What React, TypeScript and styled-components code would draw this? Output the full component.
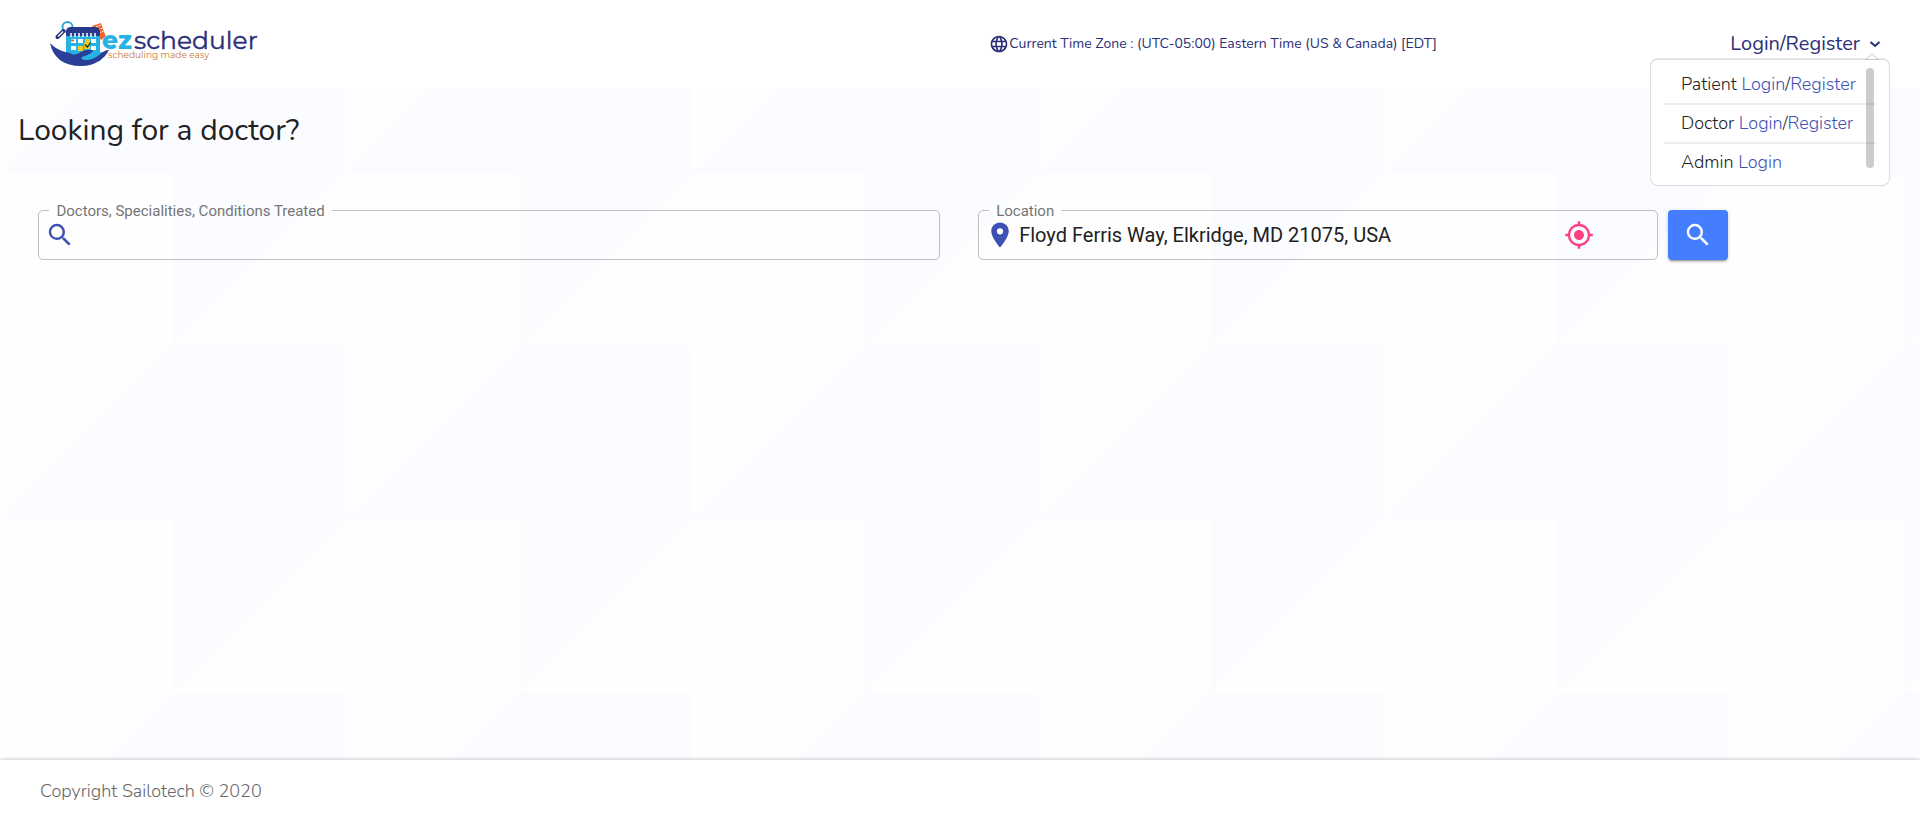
import React from "react";
import styled, { createGlobalStyle } from "styled-components";
import { MdLanguage, MdLocationOn, MdMyLocation, MdSearch } from "react-icons/md";

const sans = `Nunito, "Open Sans", sans-serif`;
const logoFont = `Montserrat, "Open Sans", sans-serif`;
const navy = "#2b2f77";
const indigo = "#3f51b5";

const GlobalStyle = createGlobalStyle`
  *, *::before, *::after { box-sizing: border-box; }
  body { margin: 0; font-family: ${sans}; font-weight: 400; color: #212121; }
  a { text-decoration: none; }
`;

const Page = styled.div`
  display: flex;
  flex-direction: column;
  min-height: 100vh;
  background:
    conic-gradient(transparent 50%, #fefefe 50% 75%, transparent 75%) 0 0 / 346px 346px,
    linear-gradient(135deg, #fefefe 25%, #fbfcff 25% 75%, #fefefe 75%) 0 0 / 346px 346px;
`;

const Header = styled.header`
  display: grid;
  grid-template-columns: 51% 1fr auto;
  align-items: center;
  height: 88px;
  padding: 0 38px 0 48px;
  background: #fff;
`;

const LogoLink = styled.a`
  display: block;
  width: 216px;
  height: 56px;
  svg { display: block; }
`;

const TimeZone = styled.div`
  display: flex;
  align-items: center;
  padding-left: 6px;
  font-size: 14px;
  line-height: 20px;
  color: ${navy};
  white-space: nowrap;
`;

const Account = styled.div`
  position: relative;
`;

const AccountButton = styled.button`
  display: flex;
  align-items: center;
  gap: 8px;
  padding: 0;
  border: 0;
  background: none;
  font: 400 20px/28px ${sans};
  color: ${navy};
  cursor: pointer;
`;

const Menu = styled.nav`
  position: absolute;
  top: 28px;
  right: -8px;
  width: 240px;
  padding: 6px 13px 4px;
  border: 1px solid #dcdcdc;
  border-top: 2px solid #e4e4e4;
  border-radius: 8px;
  background: #fff;
`;

const MenuCaret = styled.svg`
  position: absolute;
  top: -7px;
  right: 10px;
`;

const MenuThumb = styled.span`
  position: absolute;
  top: 8px;
  right: 15px;
  width: 8px;
  height: 100px;
  border-radius: 4px;
  background: rgba(0, 0, 0, 0.2);
`;

const MenuList = styled.ul`
  margin: 0;
  padding: 0;
  list-style: none;
`;

const MenuItem = styled.li`
  padding-left: 17px;
  font-size: 18px;
  font-weight: 300;
  line-height: 37px;
  white-space: nowrap;
  & + & { border-top: 2px solid #eee; }
  a { color: ${indigo}; }
`;

const Main = styled.main`
  flex: 1;
`;

const Title = styled.h1`
  margin: 20px 18px 0;
  font-size: 30px;
  font-weight: 400;
  line-height: 46px;
`;

const SearchForm = styled.form`
  display: flex;
  margin: 56px 10% 0 2%;
`;

const Field = styled.fieldset<{ $grow: number }>`
  flex: ${(p) => p.$grow} 1 0;
  min-width: 0;
  height: 50px;
  margin: 0;
  padding: 0 6px;
  border: 1px solid #c0c0c0;
  border-radius: 5px;
  font-family: Roboto, sans-serif;
  color: ${indigo};
  & + & { margin-left: 38px; }
`;

const Legend = styled.legend`
  height: 0;
  margin-left: 4px;
  padding: 0 7px;
  font-size: 15px;
  line-height: 0;
  color: #757575;
`;

const FieldRow = styled.div`
  display: flex;
  align-items: center;
  height: 48px;
`;

const TextInput = styled.input`
  flex: 1;
  min-width: 0;
  height: 40px;
  padding: 0 4px;
  border: 0;
  outline: 0;
  background: none;
  font: 400 20px/24px Roboto, sans-serif;
  color: #212121;
`;

const LocateButton = styled.button`
  display: flex;
  margin-right: 57px;
  padding: 0;
  border: 0;
  background: none;
  color: #ff4081;
  cursor: pointer;
`;

const SearchButton = styled.button`
  display: flex;
  flex: 0 0 60px;
  align-items: center;
  justify-content: center;
  height: 50px;
  margin-left: 10px;
  padding: 0;
  border: 0;
  border-radius: 4px;
  background: #447dff;
  color: #fff;
  box-shadow: 0 3px 1px -2px rgba(0, 0, 0, 0.2), 0 2px 2px rgba(0, 0, 0, 0.14), 0 1px 5px rgba(0, 0, 0, 0.12);
  cursor: pointer;
`;

const Footer = styled.footer`
  padding: 0 40px;
  background: #fff;
  box-shadow: 0 0 4px rgba(0, 0, 0, 0.3);
  font-size: 18px;
  font-weight: 300;
  line-height: 62px;
  color: #666;
`;

function Logo() {
  return (
    <svg width="216" height="56" viewBox="48 16 216 56" role="img" aria-label="ezscheduler, scheduling made easy">
      <path d="M92 26l9-3 5 14-5 3z" fill="#f2672a" />
      <path d="M96 27l5-2M98 30l5-2M99 33l5-2" stroke="#fff" strokeWidth="1" strokeDasharray="2 1" />
      <circle cx="67.500" cy="27" r="5" fill="#fff" stroke="#29abe2" strokeWidth="2" />
      <path d="M63.500 31l-6 6" stroke={navy} strokeWidth="4" strokeLinecap="round" />
      <path d="M63 31.500l-5 5" stroke="#fff" strokeWidth="1.200" />
      <rect x="66" y="29" width="34" height="30" rx="3" fill="#27b2e4" />
      <path d="M66 36v-4q0-5 5-5h24q5 0 5 5v4z" fill="#293a8c" />
      <path d="M71 33v4M75 33v4M79 33v4M83 33v4M87 33v4M91 33v4M95 33v4" stroke="#fff" strokeWidth="1.500" />
      <path d="M71 39h5v4h-5zM78 39h5v4h-5zM91 39h5v4h-5zM71 46h5v4h-5zM91 46h5v4h-5z" fill="#fff" />
      <path d="M71 40.500h3" stroke="#f2672a" strokeWidth="2" />
      <path d="M85 39h5v4h-5zM78 46h5v5h-5zM84 43h6v6h-6z" fill="#f4cc1c" />
      <path d="M85 44.500l2.500 2.500 3-4.500" fill="none" stroke="#222" strokeWidth="1.300" />
      <path d="M76 58l8-5 22-1-6 9-14 1z" fill="#27b2e4" />
      <path
        d="M50 43C57 50 64 52 70 53Q74 56 79 53C84 50 90 49 93 50.500C92 53 88 55 82 57C80 60 86 61 92 59C99 57 102 50 109 50C105 58 96 66 81 66C64 66 53 58 50 43z"
        fill="#2b3f98"
      />
      <g fontFamily={logoFont}>
        <text x="102" y="49" fontSize="25" fontWeight="800" fill="#27b2e4">ez</text>
        <text x="134" y="49" fontSize="25" fontWeight="400" fill={navy} stroke={navy} strokeWidth="0.400">scheduler</text>
        <text x="108" y="58" fontSize="9" fontWeight="400" fill="#c9782f">scheduling made easy</text>
      </g>
    </svg>
  );
}

const accounts = [
  { role: "Patient", actions: ["Login", "Register"] },
  { role: "Doctor", actions: ["Login", "Register"] },
  { role: "Admin", actions: ["Login"] },
];

export default function App() {
  return (
    <Page>
      <GlobalStyle />
      <Header>
        <LogoLink href="#"><Logo /></LogoLink>
        <TimeZone>
          <MdLanguage size={20} />
          Current Time Zone : (UTC-05:00) Eastern Time (US &amp; Canada) [EDT]
        </TimeZone>
        <Account>
          <AccountButton type="button" aria-expanded="true">
            Login/Register
            <svg width="14" height="14" viewBox="0 0 14 14" fill="none" stroke="currentColor" strokeWidth="2">
              <path d="M2.500 5l4.500 4 4.500-4" />
            </svg>
          </AccountButton>
          <Menu aria-label="Account">
            <MenuCaret width="14" height="8" viewBox="0 0 14 8">
              <path d="M1 6.500L7 1l6 5.500" fill="#fff" stroke="#c8c8c8" />
              <path d="M0 6.500h14" stroke="#c8c8c8" />
            </MenuCaret>
            <MenuList>
              {accounts.map(({ role, actions }) => (
                <MenuItem key={role}>
                  {role}{" "}
                  {actions.map((action, i) => (
                    <React.Fragment key={action}>
                      {i > 0 && "/"}
                      <a href="#">{action}</a>
                    </React.Fragment>
                  ))}
                </MenuItem>
              ))}
            </MenuList>
            <MenuThumb />
          </Menu>
        </Account>
      </Header>
      <Main>
        <Title>Looking for a doctor?</Title>
        <SearchForm onSubmit={(e) => e.preventDefault()}>
          <Field $grow={4}>
            <Legend><label htmlFor="query">Doctors, Specialities, Conditions Treated</label></Legend>
            <FieldRow>
              <MdSearch size={30} />
              <TextInput id="query" type="text" />
            </FieldRow>
          </Field>
          <Field $grow={3}>
            <Legend><label htmlFor="location">Location</label></Legend>
            <FieldRow>
              <MdLocationOn size={30} />
              <TextInput id="location" type="text" defaultValue="Floyd Ferris Way, Elkridge, MD 21075, USA" />
              <LocateButton type="button" aria-label="Use my location"><MdMyLocation size={30} /></LocateButton>
            </FieldRow>
          </Field>
          <SearchButton type="submit" aria-label="Search"><MdSearch size={30} /></SearchButton>
        </SearchForm>
      </Main>
      <Footer>Copyright Sailotech © 2020</Footer>
    </Page>
  );
}
